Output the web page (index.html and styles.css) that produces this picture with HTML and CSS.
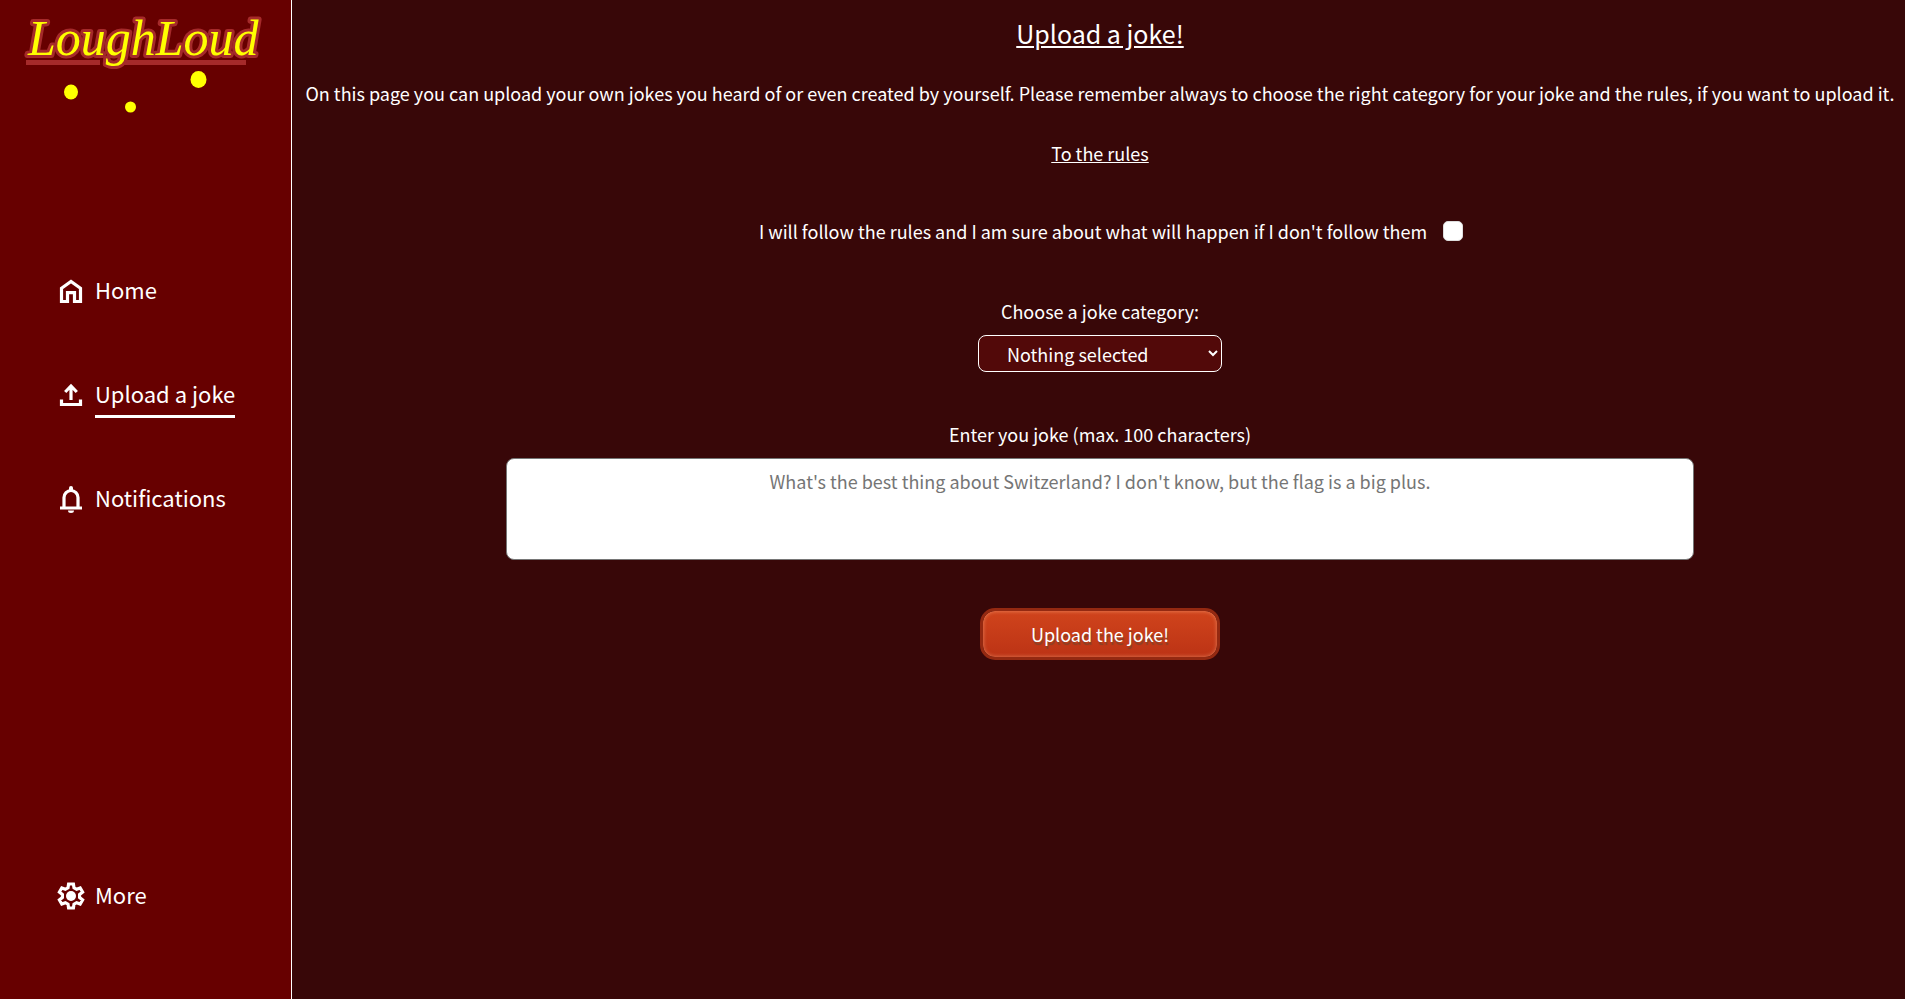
FILE: index.html
```html
<!DOCTYPE html>
<html lang="en">
<head>
<meta charset="utf-8">
<title>Upload a joke! - LoughLoud</title>
<link rel="stylesheet" href="styles.css">
</head>
<body>
<aside class="sidebar">
  <svg class="logo" viewBox="0 0 291 120" role="img" aria-label="LoughLoud">
    <path class="logo-line" d="M26 60h74v5h-74zM123 60h123v5h-123z"/>
    <text class="logo-text" x="28" y="55">LoughLoud</text>
    <g class="logo-dots">
      <ellipse cx="71" cy="92" rx="7" ry="7.5"/>
      <circle cx="130.500" cy="107" r="5.500"/>
      <ellipse cx="198.500" cy="79.500" rx="8" ry="8.500"/>
    </g>
  </svg>
  <nav class="nav">
    <a class="nav-link" href="#home">
      <svg class="icon" viewBox="0 0 28 28"><path d="M4.500 24.500V11.200L14 4.400l9.500 6.800v13.300h-6v-8.800h-7v8.800z"/></svg>
      <span class="nav-label">Home</span>
    </a>
    <a class="nav-link active" href="#upload">
      <svg class="icon" viewBox="0 0 28 28"><path d="M14 19V5M8.200 11l5.800-6 5.800 6M4.500 18.500v5h19v-5"/></svg>
      <span class="nav-label">Upload a joke</span>
    </a>
    <a class="nav-link" href="#notifications">
      <svg class="icon" viewBox="0 0 28 28"><path d="M3 23h22M7 23V12.500a7 7 0 0 1 14 0V23"/><path class="solid" d="M12 5V3a2 2 0 0 1 4 0v2zM11 25.500h6a3 2.500 0 0 1-6 0z"/></svg>
      <span class="nav-label">Notifications</span>
    </a>
    <a class="nav-link more" href="#more">
      <svg class="icon" viewBox="0 0 28 28"><path d="M11.600 2h4.800l.6 3.800 2.600 1.500 3.600-1.400 2.400 4.100-3 2.400v3.200l3 2.400-2.400 4.100-3.600-1.400-2.600 1.500-.6 3.800h-4.800l-.6-3.800-2.600-1.500-3.600 1.400L2.400 18l3-2.400v-3.200l-3-2.400 2.400-4.100 3.600 1.400L11 5.800z"/><circle class="solid" cx="14" cy="14" r="5"/></svg>
      <span class="nav-label">More</span>
    </a>
  </nav>
</aside>
<main class="main">
  <h1 class="title">Upload a joke!</h1>
  <p class="intro">On this page you can upload your own jokes you heard of or even created by yourself. Please remember always to choose the right category for your joke and the rules, if you want to upload it.</p>
  <a class="rules" href="#rules">To the rules</a>
  <form class="form">
    <div class="agree">
      <label for="agree">I will follow the rules and I am sure about what will happen if I don't follow them</label>
      <input class="check" type="checkbox" id="agree">
    </div>
    <div class="field">
      <label for="category">Choose a joke category:</label>
      <select class="select" id="category"><option>Nothing selected</option></select>
    </div>
    <div class="field">
      <label for="joke">Enter you joke (max. 100 characters)</label>
      <textarea class="joke" id="joke" maxlength="100" placeholder="What's the best thing about Switzerland? I don't know, but the flag is a big plus."></textarea>
    </div>
    <button class="submit" type="button">Upload the joke!</button>
  </form>
</main>
</body>
</html>
```

FILE: styles.css
```css
* { box-sizing: border-box; }

body {
  margin: 0;
  min-height: 100vh;
  display: flex;
  background: #380708;
  color: #fff;
  font: 18px/24px "Noto Sans CJK SC", "Noto Sans", sans-serif;
}

.sidebar {
  flex: 0 0 292px;
  display: flex;
  flex-direction: column;
  background: #670000;
  border-right: 1px solid #fff;
}

.logo { display: block; width: 100%; }
.logo-text {
  font: italic 50px "Liberation Serif", serif;
  fill: #ff0;
  stroke: #a52a2a;
  stroke-width: 6px;
  stroke-linejoin: round;
  paint-order: stroke;
}
.logo-line { fill: #a52a2a; }
.logo-dots { fill: #ff0; }

.nav {
  flex: 1;
  display: flex;
  flex-direction: column;
  gap: 64px;
  padding: 151px 0 83px 57px;
}
.nav-link {
  display: flex;
  align-items: center;
  gap: 10px;
  height: 40px;
  color: #fff;
  font-size: 22px;
  line-height: 32px;
  text-decoration: none;
}
.nav-label { padding: 2px 0 6px; border: solid transparent; border-width: 3px 0; }
.active .nav-label { border-bottom-color: #fff; }
.more { margin-top: auto; }
.icon {
  width: 28px;
  height: 28px;
  fill: none;
  stroke: #fff;
  stroke-width: 3.2;
}
.solid { fill: #fff; stroke: none; }

.main {
  flex: 1;
  min-width: 0;
  display: flex;
  flex-direction: column;
  align-items: center;
  padding: 17px 8px 17px 11px;
  text-align: center;
}
.title { margin: 0; font-size: 25px; line-height: 32px; font-weight: 400; text-decoration: underline; }
.intro { margin: 32px 0 36px; }
.rules { color: #fff; }
.form {
  width: 100%;
  display: flex;
  flex-direction: column;
  align-items: center;
}
.agree { display: flex; align-items: center; gap: 16px; margin: 54px 0 56px 22px; }
.check {
  appearance: none;
  width: 20px;
  height: 20px;
  margin: 0;
  background: #fff;
  border: 1px solid #ddd;
  border-radius: 5px;
}
.check:checked { background: #d0441c; }
.field {
  width: 100%;
  display: flex;
  flex-direction: column;
  align-items: center;
  gap: 12px;
  margin-bottom: 50px;
}
.select {
  width: 244px;
  height: 37px;
  padding: 0 0 0 24px;
  background: #520909;
  color: #fff;
  border: 1px solid #fff;
  border-radius: 8px;
  font: inherit;
}
.joke {
  display: block;
  width: 74.5%;
  height: 102px;
  padding: 10px;
  background: #fff;
  border: 1px solid #767676;
  border-radius: 8px;
  color: #222;
  font: inherit;
  text-align: center;
  resize: none;
}
.joke::placeholder { color: #757575; }
.submit {
  width: 240px;
  height: 52px;
  margin-top: -2px;
  padding: 0;
  background: linear-gradient(#d0441c, #bc3315);
  background-clip: padding-box;
  border: 3px solid #942911;
  border-radius: 15px;
  box-shadow: inset 0 0 4px rgba(255, 180, 140, .6);
  color: #fff;
  font: inherit;
  text-shadow: 1px 3px 1px #854025;
}
```
